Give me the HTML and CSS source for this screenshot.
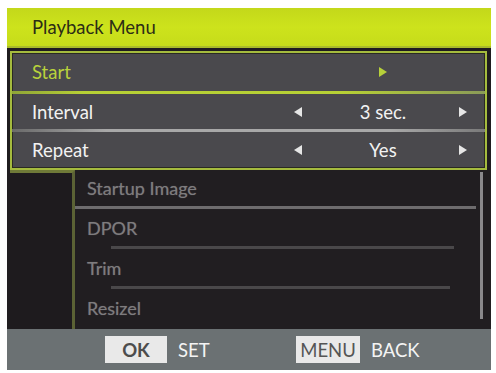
FILE: index.html
```html
<!DOCTYPE html>
<html>
<head>
<meta charset="utf-8">
<link rel="stylesheet" href="styles.css">
</head>
<body>
<div class="screen">
  <div class="header"><span class="title">Playback Menu</span></div>
  <div class="popup">
    <div class="row row-1">
      <span class="label label-active">Start</span>
      <span class="ctrl">
        <span class="arr-l"></span>
        <span class="value"><span class="tri tri-r tri-green"></span></span>
        <span class="arr-r"></span>
      </span>
    </div>
    <div class="sep sep-green"></div>
    <div class="row row-2">
      <span class="label">Interval</span>
      <span class="ctrl">
        <span class="arr-l"><span class="tri tri-l"></span></span>
        <span class="value">3 sec.</span>
        <span class="arr-r"><span class="tri tri-r"></span></span>
      </span>
    </div>
    <div class="sep sep-grey"></div>
    <div class="row row-3">
      <span class="label">Repeat</span>
      <span class="ctrl">
        <span class="arr-l"><span class="tri tri-l"></span></span>
        <span class="value">Yes</span>
        <span class="arr-r"><span class="tri tri-r"></span></span>
      </span>
    </div>
  </div>
  <div class="below">
    <div class="side"></div>
    <div class="list">
      <div class="item">Startup Image</div>
      <div class="line line-full"></div>
      <div class="item">DPOR</div>
      <div class="line line-mid"></div>
      <div class="item">Trim</div>
      <div class="line line-mid2"></div>
      <div class="item">Resizel</div>
    </div>
    <div class="scroll"></div>
  </div>
  <div class="footer">
    <span class="key key-ok">OK</span><span class="klabel klabel-set">SET</span>
    <span class="key key-menu">MENU</span><span class="klabel">BACK</span>
  </div>
</div>
</body>
</html>
```

FILE: styles.css
```css
* { box-sizing: border-box; }
html, body { margin: 0; padding: 0; background: #ffffff; }
body { font-family: "Lato", "Open Sans", sans-serif; }

.screen {
  width: 484px;
  height: 362px;
  margin: 8px 0 0 7px;
  background: #1f1c1f;
  display: flex;
  flex-direction: column;
}

.header {
  height: 40px;
  flex: none;
  background: linear-gradient(180deg, #c3d81a 0%, #cde31c 50%, #c6dc1a 100%);
  display: flex;
  align-items: center;
  padding-left: 25px;
  border-bottom: 2px solid #a9bb2a;
}
.title {
  font-size: 18.5px;
  color: #2c2d16;
}

.popup {
  flex: none;
  margin: 3px 4px 0 3px;
  background: #4a494d;
  border: 2px solid #a5bb3e;
  box-shadow: inset 0 0 0 1px #2a2a22;
  height: 119px;
  display: flex;
  flex-direction: column;
}
.row {
  display: flex;
  align-items: center;
  padding-left: 20px;
  font-size: 18.5px;
  color: #f2f2f2;
}
.row-1 { height: 38px; }
.row-2 { height: 35px; }
.row-3 { height: 36px; }
.label { width: 238px; }
.label-active { color: #b9d23c; }

.ctrl {
  display: flex;
  align-items: center;
}
.arr-l {
  width: 60px;
  padding-left: 24px;
  display: flex;
}
.value {
  width: 106px;
  display: flex;
  justify-content: center;
  align-items: center;
}
.arr-r {
  width: 40px;
  padding-left: 23px;
  display: flex;
}

.tri {
  display: inline-block;
  width: 0;
  height: 0;
  border-top: 5px solid transparent;
  border-bottom: 5px solid transparent;
}
.tri-r { border-left: 8px solid #e6e6e6; }
.tri-l { border-right: 8px solid #e6e6e6; }
.tri-green { border-left-color: #b7d03a; }

.sep { height: 3px; flex: none; }
.sep-green { background: linear-gradient(90deg, #8fa437 0%, #b7d035 15%, #b7d035 70%, #8a9a58 100%); }
.sep-grey { background: linear-gradient(90deg, #6a6a6a 0%, #a8a8a8 20%, #a8a8a8 80%, #7a7a7a 100%); }

.below {
  flex: 1;
  display: flex;
  background: #211e21;
}
.side {
  width: 65px;
  margin-left: 3px;
  background: #1e1b1e;
  border-top: 3px solid #6f7a38;
  border-right: 3px solid #5b6235;
}
.list {
  flex: 1;
  display: flex;
  flex-direction: column;
}
.item {
  height: 37px;
  display: flex;
  align-items: center;
  padding-left: 12px;
  font-size: 18px;
  color: #7e7c7e;
  text-shadow: 0 0 1px #5a585a;
}
.item:first-child { height: 36px; }
.line { height: 3px; background: #6e6c6e; }
.line-full { margin-right: 4px; }
.line-mid { margin-left: 36px; margin-right: 26px; background: #4a484a; }
.line-mid2 { margin-left: 36px; margin-right: 30px; background: #4a484a; }
.scroll {
  width: 3px;
  margin: 2px 8px 10px 0;
  background: #8a898c;
}

.footer {
  height: 41px;
  flex: none;
  background: #6b7173;
  display: flex;
  align-items: center;
  padding-left: 98px;
  font-size: 18.5px;
  color: #f4f4f4;
}
.key {
  display: inline-flex;
  align-items: center;
  justify-content: center;
  height: 27px;
  background: #e9e9e9;
  color: #4d4d4d;
}
.key-ok { width: 62px; font-weight: 700; }
.key-menu { width: 64px; color: #555555; }
.klabel { margin-left: 11px; }
.klabel-set { width: 118px; }
```
